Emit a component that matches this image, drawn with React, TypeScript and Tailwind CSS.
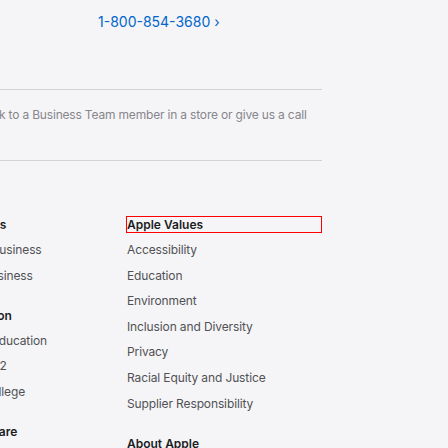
const sections = [
  [
    { title: "For Business", links: ["Apple and Business", "Shop for Business"] },
    { title: "For Education", links: ["Apple and Education", "Shop for K-12", "Shop for College"] },
    { title: "For Healthcare", links: ["Apple in Healthcare"] },
  ],
  [
    { title: "Apple Values", links: ["Accessibility", "Education", "Environment", "Inclusion and Diversity", "Privacy", "Racial Equity and Justice", "Supplier Responsibility"] },
    { title: "About Apple", links: ["Newsroom"] },
  ],
]

export default function App() {
  return (
    <div className="w-[448px] h-[448px] overflow-hidden bg-[#f5f5f7] font-['Inter',sans-serif]">
      <div className="-ml-[69px] w-[391px]">
        <div className="pt-[12px] pl-[167px] text-[14px] leading-5 text-[#0066cc]">1-800-854-3680 ›</div>
        <div className="mt-[57px] border-t border-[#d2d2d7]" />
        <div className="pt-[17px] pb-[37px] pl-[52px] text-[12px] leading-4 tracking-[-0.18px] text-[#86868b]">
          Talk to a Business Team member in a store or give us a call
        </div>
        <div className="border-t border-[#d2d2d7]" />
        <div className="flex pt-[55px]">
          {sections.map((col, i) => (
            <div key={i} className={i === 0 ? "w-[195px] shrink-0" : "w-[196px] shrink-0"}>
              {col.map((s, j) => (
                <div key={s.title} className="mb-[23px]">
                  <h3
                    className={
                      "h-[17px] mb-[9px] text-[12px] leading-[15px] font-semibold text-[#1d1d1f] border " +
                      (i === 1 && j === 0 ? "border-[#ff0000]" : "border-transparent")
                    }
                  >
                    {s.title}
                  </h3>
                  <ul>
                    {s.links.map((l) => (
                      <li key={l} className="mb-[9.6px] pl-px text-[12px] leading-4 tracking-[-0.12px] text-[#515154]">
                        {l}
                      </li>
                    ))}
                  </ul>
                </div>
              ))}
            </div>
          ))}
        </div>
      </div>
    </div>
  )
}
